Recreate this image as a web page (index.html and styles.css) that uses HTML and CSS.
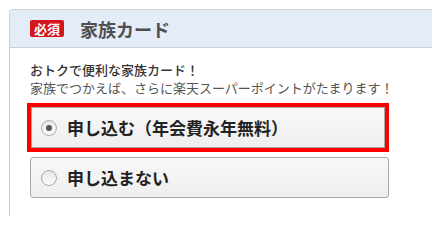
FILE: index.html
```html
<!DOCTYPE html>
<html lang="ja">
<head>
<meta charset="utf-8">
<link rel="stylesheet" href="styles.css">
</head>
<body>
<section class="panel">
  <header class="panel-head">
    <span class="badge">必須</span>
    <h2 class="title">家族カード</h2>
  </header>
  <div class="panel-body">
    <p class="lead">おトクで便利な家族カード！</p>
    <p class="sub">家族でつかえば、さらに楽天スーパーポイントがたまります！</p>
    <div class="options">
      <label class="opt-wrap selected">
        <span class="opt">
          <span class="radio checked"></span>
          <span class="opt-text">申し込む（年会費永年無料）</span>
        </span>
      </label>
      <label class="opt-wrap">
        <span class="opt">
          <span class="radio"></span>
          <span class="opt-text">申し込まない</span>
        </span>
      </label>
    </div>
  </div>
</section>
</body>
</html>
```
FILE: styles.css
```css
html, body {
  margin: 0;
  padding: 0;
  background: #fff;
  overflow: hidden;
}
body {
  font-family: "Noto Sans CJK JP", "Noto Sans", sans-serif;
  height: 216px;
}
.panel {
  margin: 9px 0 0 9px;
  height: 207px;
  border: 1px solid #cfcfcf;
  border-right: none;
  border-bottom: none;
  border-radius: 4px 0 0 0;
  box-sizing: border-box;
}
.panel-head {
  height: 37px;
  background: #e4ecf7;
  border-bottom: 1px solid #cfcfcf;
  border-radius: 3px 0 0 0;
  display: flex;
  align-items: center;
  padding-left: 20px;
}
.badge {
  display: inline-block;
  background: #d4161c;
  color: #fff;
  font-weight: bold;
  font-size: 13px;
  line-height: 17px;
  height: 17px;
  padding: 0 4px;
  border-radius: 2px;
}
.title {
  margin: 0 0 0 16px;
  font-size: 18px;
  font-weight: bold;
  color: #4f4f4f;
  line-height: 22px;
}
.panel-body {
  padding: 13px 0 0 20px;
}
.lead {
  margin: 0;
  font-size: 13px;
  line-height: 18px;
  font-weight: 500;
  color: #333;
}
.sub {
  margin: 0;
  font-size: 13px;
  line-height: 18px;
  color: #555;
}
.options {
  margin-top: 6px;
  display: flex;
  flex-direction: column;
  gap: 5px;
}
.opt-wrap {
  display: block;
  width: 359px;
}
.opt-wrap.selected {
  margin-left: -3px;
  width: 354px;
  border: 4px solid #ff0000;
}
.opt {
  display: flex;
  align-items: center;
  height: 39px;
  border: 1px solid #a8a8a8;
  border-radius: 3px;
  background: linear-gradient(#f8f8f8, #eeeeee);
  padding-left: 10px;
}
.selected .opt {
  border-radius: 0;
  padding-left: 9px;
}
.radio {
  width: 14px;
  height: 14px;
  border: 1px solid #a9a9a9;
  border-radius: 50%;
  background: linear-gradient(#e8e8e8, #fbfbfb);
  display: flex;
  align-items: center;
  justify-content: center;
  flex: none;
}
.radio.checked::after {
  content: "";
  width: 6px;
  height: 6px;
  border-radius: 50%;
  background: #555;
}
.opt-text {
  margin-left: 10px;
  font-size: 17px;
  font-weight: bold;
  color: #222;
  line-height: 20px;
}
```
